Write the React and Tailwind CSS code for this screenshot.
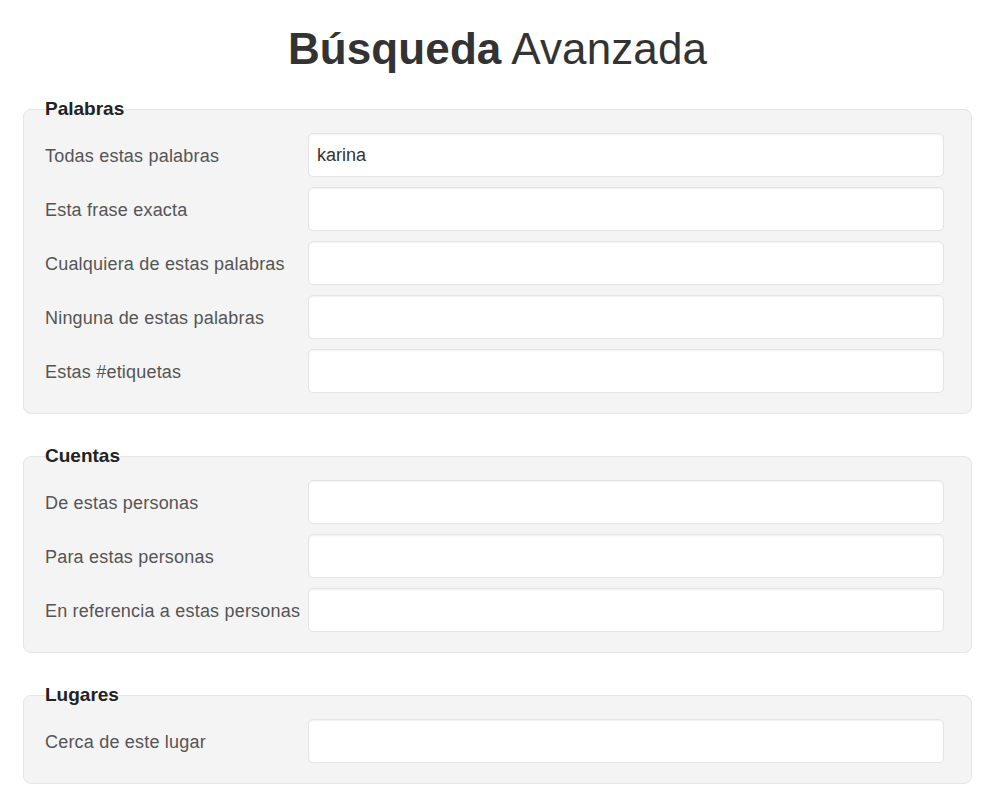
import React from "react";

const sections = [
  {
    title: "Palabras",
    rows: [
      ["Todas estas palabras", "karina"],
      ["Esta frase exacta", ""],
      ["Cualquiera de estas palabras", ""],
      ["Ninguna de estas palabras", ""],
      ["Estas #etiquetas", ""],
    ],
  },
  {
    title: "Cuentas",
    rows: [
      ["De estas personas", ""],
      ["Para estas personas", ""],
      ["En referencia a estas personas", ""],
    ],
  },
  {
    title: "Lugares",
    rows: [["Cerca de este lugar", ""]],
  },
];

export default function App() {
  return (
    <div
      className="min-h-[809px] bg-white pl-[23px] pr-[28px]"
      style={{ fontFamily: '"Liberation Sans", Arial, sans-serif' }}
    >
      <h1 className="pt-[23px] text-center text-[44px] leading-[52px] tracking-[0.1px] text-[#333333]">
        <span className="font-bold">Búsqueda</span> Avanzada
      </h1>
      <div className="mt-[24px] flex flex-col gap-[32px]">
        {sections.map((s) => (
          <fieldset
            key={s.title}
            className="m-0 min-w-0 rounded-[8px] border border-[#e6e6e6] bg-[#f4f4f4] pb-[20px] pl-[21px] pr-[27px] pt-[14px]"
          >
            <legend className="p-0 text-[19px] font-bold leading-[20px] text-[#222222]">
              {s.title}
            </legend>
            <div className="flex flex-col gap-[10px]">
              {s.rows.map(([label, value]) => (
                <div key={label} className="flex items-center">
                  <label className="w-[263px] shrink-0 pt-[2px] text-[18px] leading-[22px] tracking-[0.2px] text-[#555555]">
                    {label}
                  </label>
                  <input
                    type="text"
                    defaultValue={value}
                    className="h-[44px] flex-1 rounded-[5px] border border-[#e4e4e4] bg-white px-[8px] text-[18px] text-[#333333] shadow-[inset_0_1px_2px_rgba(0,0,0,0.06)] outline-none"
                    style={{ fontFamily: '"Liberation Sans", Arial, sans-serif' }}
                  />
                </div>
              ))}
            </div>
          </fieldset>
        ))}
      </div>
    </div>
  );
}
